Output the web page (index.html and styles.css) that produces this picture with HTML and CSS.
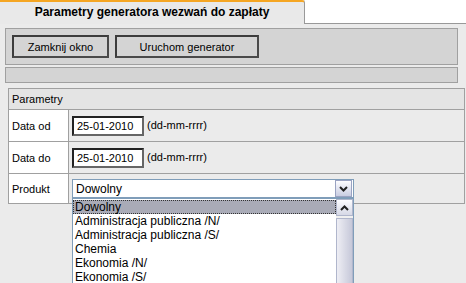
FILE: index.html
```html
<!DOCTYPE html>
<html lang="pl">
<head>
  <meta charset="UTF-8">
  <title>Parametry generatora wezwań do zapłaty</title>
  <link rel="stylesheet" href="styles.css">
</head>
<body>
  <div class="tabs">
    <div class="tab">Parametry generatora wezwań do zapłaty</div>
    <div class="tab-rest"></div>
  </div>

  <div class="content">
    <div class="toolbar">
      <button class="btn btn-close">Zamknij okno</button>
      <button class="btn btn-run">Uruchom generator</button>
    </div>
    <div class="status"></div>

    <table class="params">
      <tr class="head">
        <td colspan="2">Parametry</td>
      </tr>
      <tr>
        <td class="label">Data od</td>
        <td class="value"><span class="date-input">25-01-2010</span> (dd-mm-rrrr)</td>
      </tr>
      <tr>
        <td class="label">Data do</td>
        <td class="value"><span class="date-input">25-01-2010</span> (dd-mm-rrrr)</td>
      </tr>
      <tr class="last">
        <td class="label">Produkt</td>
        <td class="value">
          <div class="combo">
            <span class="combo-text">Dowolny</span>
            <span class="combo-btn">
              <svg width="9" height="6" viewBox="0 0 9 6"><path d="M1 1 L4.5 4.5 L8 1" fill="none" stroke="#222" stroke-width="2"/></svg>
            </span>
            <div class="dropdown">
              <ul class="options">
                <li class="selected">Dowolny</li>
                <li>Administracja publiczna /N/</li>
                <li>Administracja publiczna /S/</li>
                <li>Chemia</li>
                <li>Ekonomia /N/</li>
                <li>Ekonomia /S/</li>
              </ul>
              <div class="scrollbar">
                <span class="scroll-up">
                  <svg width="9" height="6" viewBox="0 0 9 6"><path d="M1 5 L4.5 1.5 L8 5" fill="none" stroke="#222" stroke-width="2"/></svg>
                </span>
                <span class="scroll-track"></span>
              </div>
            </div>
          </div>
        </td>
      </tr>
    </table>
  </div>
</body>
</html>
```

FILE: styles.css
```css
* {
  box-sizing: border-box;
  margin: 0;
  padding: 0;
}
body {
  font-family: 'Liberation Sans', Arial, sans-serif;
  font-size: 11px;
  color: #000;
  background: #ebebeb;
  width: 466px;
  height: 283px;
  overflow: hidden;
}
.tabs {
  display: flex;
  height: 24px;
}
.tab {
  width: 305px;
  height: 24px;
  background: #e9e9e9;
  border-top: 2px solid #f5a623;
  border-right: 1px solid #999;
  border-top-right-radius: 3px;
  font-weight: bold;
  font-size: 12px;
  text-align: center;
  line-height: 20px;
  color: #000;
}
.tab-rest {
  flex: 1;
  background: #fff;
  border-bottom: 1px solid #999;
  height: 24px;
}
.content {
  padding: 4px 0 0 5px;
}
.toolbar {
  width: 453px;
  height: 37px;
  background: #d4d4d4;
  border: 1px solid #a0a0a0;
  padding: 6px 0 0 6px;
  display: flex;
  gap: 6px;
  align-items: flex-start;
}
.btn {
  height: 23px;
  font-family: 'Liberation Sans', Arial, sans-serif;
  font-size: 11px;
  color: #000;
  background: #d4d4d4;
  border: 2px solid #4a4a4a;
  border-top-color: #3c3c3c;
  border-left-color: #3c3c3c;
}
.btn-close {
  width: 97px;
}
.btn-run {
  width: 144px;
}
.status {
  width: 453px;
  height: 16px;
  margin-top: 2px;
  background: #d4d4d4;
  border: 1px solid #a0a0a0;
}
.params {
  margin: 5px 0 0 3px;
  width: 457px;
  border-collapse: collapse;
  border: 1px solid #a0a0a0;
}
.params td {
  border: 1px solid #a0a0a0;
  padding: 0 3px;
  vertical-align: middle;
}
.params .head td {
  height: 21px;
  background: #e4e4e4;
  font-size: 11px;
}
.params tr td.label {
  width: 60px;
  height: 32px;
  background: #fff;
}
.params tr.last td.label {
  height: 30px;
}
.params td.value {
  background: #ebebeb;
}
.date-input {
  display: inline-block;
  width: 72px;
  height: 20px;
  line-height: 16px;
  padding-left: 3px;
  background: #fff;
  border: 2px solid #222;
  border-right-color: #666;
  border-bottom-color: #666;
  vertical-align: middle;
}
.combo {
  position: relative;
  width: 282px;
  height: 19px;
  background: #fff;
  border: 1px solid #7f9db9;
  display: flex;
  align-items: center;
  font-size: 12px;
}
.combo-text {
  flex: 1;
  padding-left: 3px;
}
.combo-btn {
  width: 17px;
  height: 17px;
  margin-right: 1px;
  display: flex;
  align-items: center;
  justify-content: center;
  background: linear-gradient(#fdfdff, #c9cde2);
  border: 1px solid #9aa3c2;
}
.dropdown {
  position: absolute;
  left: -1px;
  top: 18px;
  width: 282px;
  height: 90px;
  background: #fff;
  border: 1px solid #7f9db9;
  display: flex;
}
.options {
  list-style: none;
  flex: 1;
  padding-top: 1px;
}
.options li {
  height: 14px;
  line-height: 14px;
  padding-left: 2px;
  font-size: 12px;
  white-space: nowrap;
}
.options li.selected {
  background: #a9abb7;
  border: 1px dotted #333;
  line-height: 12px;
  padding-left: 1px;
}
.scrollbar {
  width: 17px;
  display: flex;
  flex-direction: column;
  background: #f0f0f0;
}
.scroll-up {
  height: 17px;
  display: flex;
  align-items: center;
  justify-content: center;
  background: linear-gradient(#fdfdff, #d6d8e6);
  border: 1px solid #b0b6cc;
}
.scroll-track {
  flex: 1;
  margin-top: 2px;
  background: linear-gradient(90deg, #eeeef4, #c6c8d9);
  border: 1px solid #b0b6cc;
}
```
